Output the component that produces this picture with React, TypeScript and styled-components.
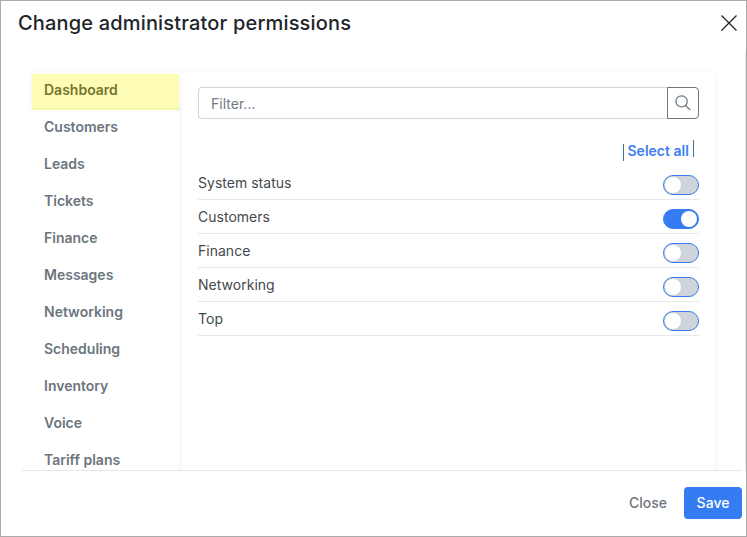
import React, { useState } from "react";
import styled, { createGlobalStyle } from "styled-components";

const GlobalStyle = createGlobalStyle`
  * { box-sizing: border-box; }
  body { margin: 0; background: #fff; font-family: Inter, sans-serif; font-size: 14px; }
  button, input { font: inherit; letter-spacing: inherit; }
`;

const Modal = styled.div`
  display: flex;
  flex-direction: column;
  width: 747px;
  height: 537px;
  border: 1px solid #ababad;
  background: linear-gradient(#e9e9ea, #e9e9ea) right 50px / 1px 420px no-repeat #fff;
  color: #45494d;
  letter-spacing: 0.02px;
  overflow: hidden;
`;

const Header = styled.header`
  display: flex;
  flex: none;
  justify-content: space-between;
  height: 66px;
  padding: 8px 8px 0 17px;
`;

const Title = styled.h1`
  margin: 0;
  font-size: 20px;
  line-height: 28px;
  font-weight: 540;
  letter-spacing: 0.165px;
  color: #212529;
`;

const CloseIcon = styled.button`
  width: 18px;
  height: 18px;
  margin-top: 5px;
  padding: 0;
  border: 0;
  background: none;
  svg { display: block; }
`;

const Body = styled.main`
  display: flex;
  flex: none;
  height: 403px;
  padding: 4px 31px 0 31px;
  overflow: hidden;
`;

const Sidebar = styled.nav`
  width: 150px;
  flex: none;
`;

const Tab = styled.div`
  height: 37px;
  padding-left: 12px;
  line-height: 38px;
  font-weight: 600;
  letter-spacing: 0;
  color: #6c757d;
`;

const TabFrame = styled.div`
  display: flow-root;
  height: 37px;
  border-radius: 4px 0 0 4px;
  box-shadow: 0 1px 5px rgba(0, 0, 0, 0.07);
`;

const ActiveTab = styled(Tab)`
  width: 147px;
  height: 36px;
  margin-top: 3px;
  line-height: 32px;
  color: #74752f;
  background: linear-gradient(#fdfdb6 0 34px, #f3f3ae 34px 35px, #f9f9b4 35px);
`;

const Panel = styled.section`
  width: 533px;
  height: 440px;
  padding: 16px;
  border-radius: 6px 6px 0 0;
  background: #fff;
  box-shadow: 0 2px 6px rgba(0, 0, 0, 0.08);
  position: relative;
`;

const Search = styled.div`
  display: flex;
  height: 32px;
`;

const Input = styled.input`
  flex: 1;
  min-width: 0;
  padding: 0 12px;
  border: 1px solid #ced4da;
  border-right: 0;
  border-radius: 4px 0 0 4px;
  outline: 0;
  color: #4b5054;
  &::placeholder { color: #737b83; opacity: 1; }
`;

const SearchButton = styled.button`
  display: grid;
  place-items: center;
  width: 32px;
  padding: 0;
  border: 1px solid #6c757d;
  border-radius: 0 4px 4px 0;
  background: #fff;
`;

const Actions = styled.div`
  display: flex;
  justify-content: flex-end;
  height: 47px;
  padding: 21px 5px 0 0;
`;

const Bar = styled.span<{ $top: number }>`
  width: 1px;
  height: 17px;
  margin-top: ${(p) => p.$top}px;
  background: #43729f;
`;

const SelectAll = styled.a`
  width: 69px;
  padding-left: 3.5px;
  line-height: 22px;
  font-weight: 600;
  letter-spacing: 0;
  white-space: nowrap;
  color: #3d80f0;
`;

const Row = styled.div`
  display: flex;
  justify-content: space-between;
  height: 34px;
  border-bottom: 1px solid #e6e8eb;
  line-height: 34px;
`;

const Switch = styled.button<{ $on: boolean }>`
  display: flex;
  justify-content: ${(p) => (p.$on ? "flex-end" : "flex-start")};
  align-items: center;
  width: 36px;
  height: 20px;
  margin-top: 9px;
  padding: 0 1px;
  border: 1px solid #357bf2;
  border-radius: 10px;
  background: ${(p) => (p.$on ? "#357bf2" : "#ced4da")};
`;

const Knob = styled.span`
  width: 16px;
  height: 16px;
  border-radius: 50%;
  background: #fff;
`;

const Footer = styled.footer`
  display: flex;
  justify-content: flex-end;
  flex: none;
  height: 65px;
  margin: 0 4px 0 21px;
  padding-top: 16px;
  border-top: 1px solid #e6e8eb;
  position: relative;
  background: #fff;
`;

const Button = styled.button<{ $primary?: boolean }>`
  width: ${(p) => (p.$primary ? 58 : 72)}px;
  height: 32px;
  padding: 0 0 1px;
  border: 0;
  border-radius: 4px;
  font-weight: ${(p) => (p.$primary ? 500 : 450)};
  color: ${(p) => (p.$primary ? "#fff" : "#6c757d")};
  background: ${(p) => (p.$primary ? "#357bf2" : "transparent")};
`;

const tabs = ["Customers", "Leads", "Tickets", "Finance", "Messages", "Networking", "Scheduling", "Inventory", "Voice", "Tariff plans"];
const names = ["System status", "Customers", "Finance", "Networking", "Top"];

export default function App() {
  const [enabled, setEnabled] = useState<string[]>(["Customers"]);
  const toggle = (n: string) =>
    setEnabled((e) => (e.includes(n) ? e.filter((x) => x !== n) : [...e, n]));

  return (
    <>
      <GlobalStyle />
      <Modal>
        <Header>
          <Title>Change administrator permissions</Title>
          <CloseIcon aria-label="Close dialog">
            <svg width="18" height="18" viewBox="0 0 18 18" stroke="#212529" strokeWidth="1.3">
              <path d="M1.5 1.5 16.5 16.5M16.5 1.5 1.5 16.5" />
            </svg>
          </CloseIcon>
        </Header>
        <Body>
          <Sidebar>
            <TabFrame>
              <ActiveTab>Dashboard</ActiveTab>
            </TabFrame>
            {tabs.map((t) => (
              <Tab key={t}>{t}</Tab>
            ))}
          </Sidebar>
          <Panel>
            <Search>
              <Input placeholder="Filter..." />
              <SearchButton aria-label="Search">
                <svg width="16" height="16" viewBox="0 0 16 16" fill="none" stroke="#65717c" strokeWidth="1.2">
                  <circle cx="6.6" cy="6.4" r="5.6" />
                  <path d="m10.7 10.5 4.6 4.6" />
                </svg>
              </SearchButton>
            </Search>
            <Actions>
              <Bar $top={4} />
              <SelectAll>Select all</SelectAll>
              <Bar $top={0} />
            </Actions>
            {names.map((n) => (
              <Row key={n}>
                {n}
                <Switch $on={enabled.includes(n)} aria-label={n} onClick={() => toggle(n)}>
                  <Knob />
                </Switch>
              </Row>
            ))}
          </Panel>
        </Body>
        <Footer>
          <Button>Close</Button>
          <Button $primary>Save</Button>
        </Footer>
      </Modal>
    </>
  );
}
